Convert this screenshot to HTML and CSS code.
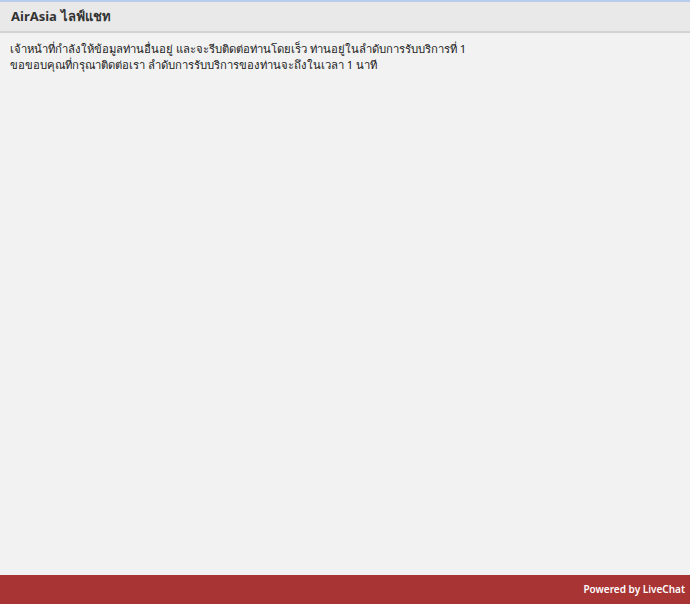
FILE: index.html
```html
<!DOCTYPE html>
<html lang="th">
<head>
    <meta charset="UTF-8">
    <meta name="viewport" content="width=device-width, initial-scale=1.0">
    <title>AirAsia ไลฟ์แชท</title>
    <link rel="stylesheet" href="styles.css">
</head>
<body>
    <div class="chat-window">
        <div class="chat-header">AirAsia ไลฟ์แชท</div>

        <div class="chat-body">
            <p class="queue-msg">เจ้าหน้าที่กำลังให้ข้อมูลท่านอื่นอยู่ และจะรีบติดต่อท่านโดยเร็ว ท่านอยู่ในลำดับการรับบริการที่ 1<br>ขอขอบคุณที่กรุณาติดต่อเรา ลำดับการรับบริการของท่านจะถึงในเวลา 1 นาที</p>
        </div>

        <div class="chat-footer">
            <span class="powered">Powered by LiveChat</span>
        </div>
    </div>
</body>
</html>
```

FILE: styles.css
```css
:root {
    --top-line: #b7cde9;
    --header-bg: #e9e9e9;
    --header-border: #d3d3d3;
    --body-bg: #f2f2f2;
    --footer-bg: #a93434;
    --text: #333;
}

html, body {
    height: 100%;
}

body {
    margin: 0;
    font-family: "Noto Sans", "DejaVu Sans", sans-serif;
    background: #fff;
    color: var(--text);
}

.chat-window {
    display: flex;
    flex-direction: column;
    height: 100%;
    width: 690px;
    background: var(--body-bg);
}

.chat-header {
    border-top: 2px solid var(--top-line);
    border-bottom: 2px solid var(--header-border);
    background: var(--header-bg);
    height: 29px;
    line-height: 29px;
    padding-left: 11px;
    font-size: 13px;
    font-weight: bold;
    color: #333;
    word-spacing: 1px;
}

.chat-body {
    flex: 1;
    padding: 8px 10px;
}

.queue-msg {
    margin: 0;
    font-size: 11.3px;
    line-height: 16px;
    color: #222;
}

.chat-footer {
    height: 29px;
    background: var(--footer-bg);
    display: flex;
    align-items: center;
    justify-content: flex-end;
    padding-right: 5px;
}

.powered {
    color: #fff;
    font-size: 10px;
    font-weight: 600;
    margin-top: -2px;
}
```
